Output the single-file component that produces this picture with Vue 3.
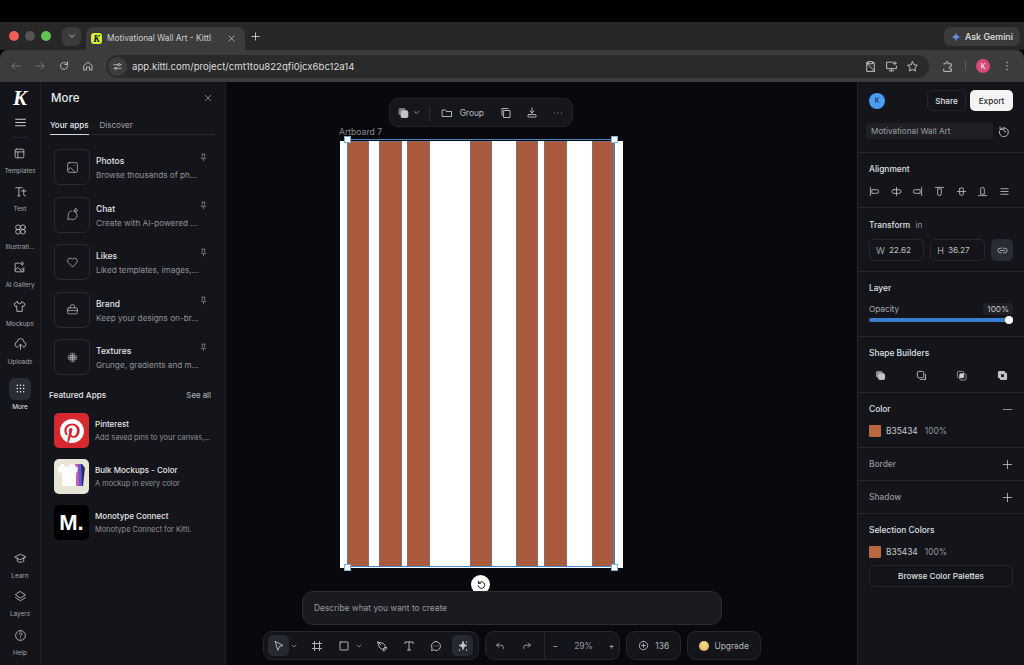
<template>
  <div class="window">
    <div class="os-bar"></div>

    <div class="tab-strip">
      <div class="lights">
        <span class="light red"></span>
        <span class="light grey"></span>
        <span class="light green"></span>
      </div>
      <div class="tab-search">
        <svg viewBox="0 0 24 24" class="ico w10"><path d="M6 9l6 6 6-6" /></svg>
      </div>
      <div class="tab">
        <span class="favicon">K</span>
        <span class="tab-title">Motivational Wall Art - Kittl</span>
        <svg viewBox="0 0 24 24" class="ico w9 light-ico"><path d="M5 5l14 14M19 5L5 19" /></svg>
      </div>
      <svg viewBox="0 0 24 24" class="ico w11 light-ico new-tab"><path d="M12 4v16M4 12h16" /></svg>
      <div class="gemini">
        <svg viewBox="0 0 24 24" class="gem-star">
          <path d="M12 1c1 6 5 10 11 11-6 1-10 5-11 11-1-6-5-10-11-11 6-1 10-5 11-11z" fill="url(#gem)" />
          <defs>
            <linearGradient id="gem" x1="0" y1="0" x2="1" y2="1">
              <stop offset="0" stop-color="#e8735a" />
              <stop offset="0.5" stop-color="#5b8def" />
              <stop offset="1" stop-color="#4f9ef5" />
            </linearGradient>
          </defs>
        </svg>
        <span>Ask Gemini</span>
      </div>
    </div>

    <div class="toolbar">
      <svg viewBox="0 0 24 24" class="ico w12 dim"><path d="M20 12H4M10 6l-6 6 6 6" /></svg>
      <svg viewBox="0 0 24 24" class="ico w12 dim"><path d="M4 12h16M14 6l6 6-6 6" /></svg>
      <svg viewBox="0 0 24 24" class="ico w12"><path d="M19 12a7 7 0 1 1-2-5l2 2M19 4v5h-5" /></svg>
      <svg viewBox="0 0 24 24" class="ico w12"><path d="M4 11l8-7 8 7v9h-5v-6H9v6H4z" /></svg>
      <div class="omnibox">
        <span class="site-info">
          <svg viewBox="0 0 24 24" class="ico w11"><path d="M4 8h9M18 8h2M4 16h2M11 16h9M13 8a2.500 2.500 0 1 0 5 0 2.500 2.500 0 1 0-5 0M6 16a2.500 2.500 0 1 0 5 0 2.500 2.500 0 1 0-5 0" /></svg>
        </span>
        <span class="url">app.kittl.com/project/cmt1tou822qfi0jcx6bc12a14</span>
        <span class="omni-actions">
          <svg viewBox="0 0 24 24" class="ico w13"><path d="M8 5H5v16h14V5h-3M8 3h8v4H8zM4 5l16 16" /></svg>
          <svg viewBox="0 0 24 24" class="ico w13"><path d="M14 4H3v12h18v-5M12 16v4M8 20h8M18 3v6M15 6h6" /></svg>
          <svg viewBox="0 0 24 24" class="ico w13"><path d="M12 3l2.800 5.800 6.200.9-4.500 4.400 1 6.200-5.500-3-5.500 3 1-6.200L3 9.700l6.200-.9z" /></svg>
        </span>
      </div>
      <svg viewBox="0 0 24 24" class="ico w13"><path d="M5 7h4V5a2 2 0 0 1 4 0v2h6v5h-2a2 2 0 0 0 0 4h2v5H5v-4" /></svg>
      <span class="tool-sep"></span>
      <span class="profile">K</span>
      <svg viewBox="0 0 24 24" class="ico w12 dots"><path d="M12 5h.01M12 12h.01M12 19h.01" /></svg>
    </div>

    <div class="app">
      <nav class="rail">
        <span class="logo">K</span>
        <svg viewBox="0 0 24 24" class="ico w13 burger"><path d="M3 6h18M3 12h18M3 18h18" /></svg>
        <span class="rail-rule"></span>
        <div v-for="item in railTop" :key="item.label" class="rail-item">
          <svg viewBox="0 0 24 24" class="ico w13"><path :d="item.d" /></svg>
          <span>{{ item.label }}</span>
        </div>
        <div class="rail-item more">
          <span class="more-box">
            <svg viewBox="0 0 24 24" class="ico w11 heavy"><path d="M5 5h.01M12 5h.01M19 5h.01M5 12h.01M12 12h.01M19 12h.01M5 19h.01M12 19h.01M19 19h.01" /></svg>
          </span>
          <span>More</span>
        </div>
        <div class="rail-bottom">
          <div v-for="item in railBottom" :key="item.label" class="rail-item">
            <svg viewBox="0 0 24 24" class="ico w13"><path :d="item.d" /></svg>
            <span>{{ item.label }}</span>
          </div>
        </div>
      </nav>

      <aside class="panel">
        <div class="panel-head">
          <span class="panel-title">More</span>
          <svg viewBox="0 0 24 24" class="ico w8"><path d="M4 4l16 16M20 4L4 20" /></svg>
        </div>
        <div class="tabs">
          <span class="tab-on">Your apps</span>
          <span class="tab-off">Discover</span>
        </div>
        <div class="apps">
          <div v-for="app in yourApps" :key="app.title" class="app-row">
            <span class="app-box">
              <svg viewBox="0 0 24 24" class="ico w13 thin"><path :d="app.d" /></svg>
            </span>
            <div class="app-text">
              <div class="app-title">{{ app.title }}</div>
              <div class="app-sub">{{ app.sub }}</div>
            </div>
            <svg viewBox="0 0 24 24" class="ico w9 pin"><path d="M8 3h8M9 3v8l-3 4h12l-3-4V3M12 15v6" /></svg>
          </div>
        </div>
        <div class="featured-head">
          <span>Featured Apps</span>
          <span class="see-all">See all</span>
        </div>
        <div class="featured">
          <div class="feat-row">
            <span class="feat-icon pinterest">
              <svg viewBox="0 0 24 24" class="pin-logo"><path fill="#fff" d="M12.017 0C5.396 0 .029 5.367.029 11.987c0 5.079 3.158 9.417 7.618 11.162-.105-.949-.199-2.403.041-3.439.219-.937 1.406-5.957 1.406-5.957s-.359-.72-.359-1.781c0-1.663.967-2.911 2.168-2.911 1.024 0 1.518.769 1.518 1.688 0 1.029-.653 2.567-.992 3.992-.285 1.193.6 2.165 1.775 2.165 2.128 0 3.768-2.245 3.768-5.487 0-2.861-2.063-4.869-5.008-4.869-3.41 0-5.409 2.562-5.409 5.199 0 1.033.394 2.143.889 2.741.099.12.112.225.085.345-.09.375-.293 1.199-.334 1.363-.053.225-.172.271-.401.165-1.495-.69-2.433-2.878-2.433-4.646 0-3.776 2.748-7.252 7.92-7.252 4.158 0 7.392 2.967 7.392 6.923 0 4.135-2.607 7.462-6.233 7.462-1.214 0-2.354-.629-2.758-1.379l-.749 2.848c-.269 1.045-1.004 2.352-1.498 3.146 1.123.345 2.306.535 3.55.535 6.607 0 11.985-5.365 11.985-11.987C23.97 5.39 18.592.026 11.985.026L12.017 0z" /></svg>
            </span>
            <div class="feat-text">
              <div class="app-title">Pinterest</div>
              <div class="app-sub">Add saved pins to your canvas,...</div>
            </div>
          </div>
          <div class="feat-row">
            <span class="feat-icon bulk">
              <svg viewBox="0 0 35 35" class="bulk-art">
                <path d="M25 5h3l3 4-2 18h-4z" fill="#27305c" />
                <path d="M23 5h4l1 22h-4z" fill="#6a55d8" />
                <path d="M21 5h3l1 22h-3z" fill="#c95fa8" />
                <path d="M8 5L3 9l2 5 3-1v14h14V13l1 1 1-5-5-4h-3a3 3 0 0 1-6 0z" fill="#fff" />
              </svg>
            </span>
            <div class="feat-text">
              <div class="app-title">Bulk Mockups - Color</div>
              <div class="app-sub">A mockup in every color</div>
            </div>
          </div>
          <div class="feat-row">
            <span class="feat-icon mono">M.</span>
            <div class="feat-text">
              <div class="app-title">Monotype Connect</div>
              <div class="app-sub">Monotype Connect for Kittl.</div>
            </div>
          </div>
        </div>
      </aside>

      <main class="canvas">
        <div class="float-bar">
          <svg viewBox="0 0 24 24" class="stack-ico">
            <rect x="1" y="1" width="16" height="16" rx="4" fill="#77787d" />
            <rect x="6" y="6" width="17" height="17" rx="4" fill="#c2c3c7" />
          </svg>
          <svg viewBox="0 0 24 24" class="ico w9"><path d="M6 9l6 6 6-6" /></svg>
          <span class="float-sep"></span>
          <svg viewBox="0 0 24 24" class="ico w12"><path d="M3 6h6l2 3h10v10H3z" /></svg>
          <span class="float-label">Group</span>
          <svg viewBox="0 0 24 24" class="ico w12 gap-r"><path d="M8 7h12v14H8zM4 17V3h12" /></svg>
          <svg viewBox="0 0 24 24" class="ico w12 gap-r"><path d="M12 2v10M8 8l4 4 4-4M5 15h14a1 1 0 0 1 1 1v3a1 1 0 0 1-1 1H5a1 1 0 0 1-1-1v-3a1 1 0 0 1 1-1z" /></svg>
          <svg viewBox="0 0 24 24" class="ico w12"><path d="M5 12h.01M12 12h.01M19 12h.01" /></svg>
        </div>

        <span class="board-name">Artboard 7</span>
        <div class="artboard"></div>
        <div
          v-for="s in stripes"
          :key="s.x"
          class="stripe"
          :style="{ left: s.x + 'px', width: s.w + 'px' }"
        ></div>
        <div class="selection"></div>
        <span class="handle tl"></span>
        <span class="handle tr"></span>
        <span class="handle bl"></span>
        <span class="handle br"></span>
        <span class="rotate">
          <svg viewBox="0 0 24 24" class="ico w10 dark"><path d="M6 8a8 8 0 1 1-1 6M6 3v5h5" /></svg>
        </span>

        <div class="dock">
          <div class="prompt">Describe what you want to create</div>
          <div class="dock-row">
            <div class="dock-group tools">
              <span class="tool on"><svg viewBox="0 0 24 24" class="ico w12"><path d="M5 3l15 8-7 2-3 7z" /></svg></span>
              <svg viewBox="0 0 24 24" class="ico w8 chev"><path d="M6 9l6 6 6-6" /></svg>
              <span class="tool"><svg viewBox="0 0 24 24" class="ico w12"><path d="M7 3v18M17 3v18M3 7h18M3 17h18" /></svg></span>
              <span class="tool"><svg viewBox="0 0 24 24" class="ico w12"><path d="M5 4h14a1 1 0 0 1 1 1v14a1 1 0 0 1-1 1H5a1 1 0 0 1-1-1V5a1 1 0 0 1 1-1z" /></svg></span>
              <svg viewBox="0 0 24 24" class="ico w8 chev"><path d="M6 9l6 6 6-6" /></svg>
              <span class="tool"><svg viewBox="0 0 24 24" class="ico w12"><path d="M4 4l11 3 4 6-6 6-6-4zM4 4l6 6M14 20l6-6 2 2-6 6z" /></svg></span>
              <span class="tool"><svg viewBox="0 0 24 24" class="ico w12"><path d="M4 7V4h16v3M12 4v16M9 20h6" /></svg></span>
              <span class="tool"><svg viewBox="0 0 24 24" class="ico w12"><path d="M12 3a9 9 0 1 1-4.500 16.800L3 21l1.200-4.500A9 9 0 0 1 12 3zM8 12h.01M12 12h.01M16 12h.01" /></svg></span>
              <span class="tool on"><svg viewBox="0 0 24 24" class="ico w12 filled"><path d="M12 3c1 5 3 7 8 8-5 1-7 3-8 8-1-5-3-7-8-8 5-1 7-3 8-8zM19 3v2M19 19v2M5 19v2" /></svg></span>
            </div>
            <div class="dock-group history">
              <span class="hist-btns">
                <svg viewBox="0 0 24 24" class="ico w10"><path d="M9 5L4 10l5 5M4 10h10a6 6 0 0 1 6 6v2" /></svg>
                <svg viewBox="0 0 24 24" class="ico w10"><path d="M15 5l5 5-5 5M20 10H10a6 6 0 0 0-6 6v2" /></svg>
              </span>
              <span class="zoom">
                <span>−</span>
                <span class="zoom-val">29%</span>
                <span>+</span>
              </span>
            </div>
            <div class="dock-group credits">
              <svg viewBox="0 0 24 24" class="ico w11"><path d="M12 3a9 9 0 1 1 0 18 9 9 0 0 1 0-18zM12 8v8M8 12h8" /></svg>
              <span>136</span>
            </div>
            <div class="dock-group upgrade">
              <span class="coin"></span>
              <span>Upgrade</span>
            </div>
          </div>
        </div>
      </main>

      <aside class="props">
        <div class="props-top">
          <div class="props-actions">
            <span class="user">K</span>
            <span class="share">Share</span>
            <span class="export">Export</span>
          </div>
          <div class="name-row">
            <span class="name-field">Motivational Wall Art</span>
            <svg viewBox="0 0 24 24" class="ico w12"><path d="M4 4v5h5M4.500 9A9 9 0 1 1 3 12M12 7v5l4 2" /></svg>
          </div>
        </div>

        <section class="sec align">
          <div class="sec-title">Alignment</div>
          <div class="icon-row">
            <svg v-for="d in alignIcons" :key="d" viewBox="0 0 24 24" class="ico w11"><path :d="d" /></svg>
          </div>
        </section>

        <section class="sec transform">
          <div class="sec-title">Transform <span class="unit">in</span></div>
          <div class="wh-row">
            <span class="wh"><i>W</i>22.62</span>
            <span class="wh"><i>H</i>36.27</span>
            <span class="link">
              <svg viewBox="0 0 24 24" class="ico w11"><path d="M10 7H7a5 5 0 0 0 0 10h3M14 7h3a5 5 0 0 1 0 10h-3M8 12h8" /></svg>
            </span>
          </div>
        </section>

        <section class="sec layer">
          <div class="sec-title">Layer</div>
          <div class="opacity-row">
            <span>Opacity</span>
            <span class="opacity-val">100%</span>
          </div>
          <div class="slider"><span class="knob"></span></div>
        </section>

        <section class="sec builders">
          <div class="sec-title">Shape Builders</div>
          <div class="icon-row wide">
            <svg viewBox="0 0 24 24" class="builder">
              <rect x="2" y="2" width="15" height="15" rx="4" fill="#8c8d92" />
              <rect x="7" y="7" width="15" height="15" rx="4" fill="#c2c3c7" />
            </svg>
            <svg viewBox="0 0 24 24" class="builder">
              <rect x="3" y="3" width="14" height="14" rx="3" fill="none" stroke="#c2c3c7" stroke-width="2" />
              <path d="M20 8a2 2 0 0 1 2 2v9a3 3 0 0 1-3 3h-9a2 2 0 0 1-2-2h9a3 3 0 0 0 3-3z" fill="#c2c3c7" />
            </svg>
            <svg viewBox="0 0 24 24" class="builder">
              <rect x="3" y="3" width="14" height="14" rx="3" fill="none" stroke="#9a9ba0" stroke-width="2" />
              <rect x="8" y="8" width="14" height="14" rx="3" fill="none" stroke="#9a9ba0" stroke-width="2" />
              <rect x="8" y="8" width="9" height="9" fill="#d4d5d8" />
            </svg>
            <svg viewBox="0 0 24 24" class="builder">
              <path fill-rule="evenodd" d="M5 2h10a3 3 0 0 1 3 3v1h1a3 3 0 0 1 3 3v10a3 3 0 0 1-3 3H9a3 3 0 0 1-3-3v-1H5a3 3 0 0 1-3-3V5a3 3 0 0 1 3-3zM9 9v6h6V9z" fill="#c2c3c7" />
            </svg>
          </div>
        </section>

        <section class="sec color">
          <div class="sec-head">
            <span class="sec-title">Color</span>
            <span class="minus"></span>
          </div>
          <div class="swatch-row">
            <span class="swatch"></span>
            <span class="hex">B35434</span>
            <span class="pct">100%</span>
          </div>
        </section>

        <section class="sec slim">
          <span class="sec-dim">Border</span>
          <svg viewBox="0 0 24 24" class="ico w11"><path d="M12 3v18M3 12h18" /></svg>
        </section>
        <section class="sec slim">
          <span class="sec-dim">Shadow</span>
          <svg viewBox="0 0 24 24" class="ico w11"><path d="M12 3v18M3 12h18" /></svg>
        </section>

        <section class="sec selection-colors">
          <div class="sec-title">Selection Colors</div>
          <div class="swatch-row">
            <span class="swatch"></span>
            <span class="hex">B35434</span>
            <span class="pct">100%</span>
          </div>
          <div class="browse">Browse Color Palettes</div>
        </section>
      </aside>
    </div>
  </div>
</template>

<script setup>
const railTop = [
  { label: 'Templates', d: 'M6 4h12a2 2 0 0 1 2 2v12a2 2 0 0 1-2 2H6a2 2 0 0 1-2-2V6a2 2 0 0 1 2-2zM4 9h16M9 9v11' },
  { label: 'Text', d: 'M3 5h12M9 5v15M7 20h4M14 11h8M18 8v10q0 2 3 2' },
  { label: 'Illustrati...', d: 'M12 8a4.500 4.500 0 1 1-9 0 4.500 4.500 0 1 1 9 0zM21 8a4.500 4.500 0 1 1-9 0 4.500 4.500 0 1 1 9 0zM12 16a4.500 4.500 0 1 1-9 0 4.500 4.500 0 1 1 9 0zM21 16a4.500 4.500 0 1 1-9 0 4.500 4.500 0 1 1 9 0z' },
  { label: 'AI Gallery', d: 'M12 4H5a1 1 0 0 0-1 1v14a1 1 0 0 0 1 1h14a1 1 0 0 0 1-1v-7M4 17l5-5 8 8M14 16l2-2 4 4M17 2c.4 2 1 2.600 3 3-2 .4-2.600 1-3 3-.4-2-1-2.600-3-3 2-.4 2.600-1 3-3z' },
  { label: 'Mockups', d: 'M8 3L2 7l2 5 3-1v10h10V11l3 1 2-5-6-4a3.500 3.500 0 0 1-8 0z' },
  { label: 'Uploads', d: 'M7 17a5 5 0 0 1-1-9.900 6 6 0 0 1 12 0A5 5 0 0 1 17 17M12 21v-9M8.500 15l3.500-3.500 3.500 3.500' }
]

const railBottom = [
  { label: 'Learn', d: 'M2 9l10-5 10 5-10 5zM6 11.500V17c3 2.500 9 2.500 12 0v-5.500' },
  { label: 'Layers', d: 'M12 3l9 6-9 6-9-6zM3 14l9 6 9-6' },
  { label: 'Help', d: 'M12 3a9 9 0 1 1 0 18 9 9 0 0 1 0-18zM9.500 9.500a2.500 2.500 0 1 1 4 2c-1 .8-1.500 1.200-1.500 2.500M12 17h.01' }
]

const yourApps = [
  { title: 'Photos', sub: 'Browse thousands of ph...', d: 'M6 3h12a3 3 0 0 1 3 3v12a3 3 0 0 1-3 3H6a3 3 0 0 1-3-3V6a3 3 0 0 1 3-3zM3 17l5-5 8 8M15 8h.01' },
  { title: 'Chat', sub: 'Create with AI-powered ...', d: 'M14 5.500A8 8 0 1 1 8.500 20.300L3 21l1.500-4.700A8 8 0 0 1 10 5.500M18 1c.4 2.200 1.200 3 3.500 3.500-2.300.5-3.100 1.300-3.500 3.500-.4-2.200-1.200-3-3.500-3.500C16.800 4 17.600 3.200 18 1z' },
  { title: 'Likes', sub: 'Liked templates, images,...', d: 'M12 20l-8-8a5 5 0 0 1 8-6 5 5 0 0 1 8 6z' },
  { title: 'Brand', sub: 'Keep your designs on-br...', d: 'M5 9h14a2 2 0 0 1 2 2v7a2 2 0 0 1-2 2H5a2 2 0 0 1-2-2v-7a2 2 0 0 1 2-2zM8 9V7a4 4 0 0 1 8 0v2M3 14h18' },
  { title: 'Textures', sub: 'Grunge, gradients and m...', d: 'M9 4v16M12 4v16M15 4v16M4 9h16M4 12h16M4 15h16' }
]

const alignIcons = [
  'M3 3v18M7 8h10a4 4 0 0 1 0 8H7z',
  'M12 3v18M6 8h12a2 2 0 0 1 0 8H6a2 2 0 0 1 0-8z',
  'M21 3v18M17 8H7a4 4 0 0 0 0 8h10z',
  'M3 3h18M8 7v10a4 4 0 0 0 8 0V7z',
  'M3 12h18M8 6v12a4 2 0 0 0 8 0V6a4 2 0 0 0-8 0z',
  'M3 21h18M8 17V7a4 4 0 0 1 8 0v10z',
  'M4 6h16M4 12h16M4 18h16'
]

const stripes = [
  { x: 121, w: 22 },
  { x: 153, w: 23 },
  { x: 181, w: 23 },
  { x: 244, w: 22 },
  { x: 290, w: 22 },
  { x: 318, w: 23 },
  { x: 366, w: 23 }
]
</script>

<style>
html,
body {
  margin: 0;
  background: #000;
}
</style>

<style scoped>
.window {
  width: 1024px;
  height: 665px;
  display: flex;
  flex-direction: column;
  overflow: hidden;
  background: #000;
  font-family: Inter, "Liberation Sans", sans-serif;
  color: #e4e5e8;
}

.ico {
  fill: none;
  stroke: currentColor;
  stroke-width: 1.8;
  stroke-linecap: round;
  stroke-linejoin: round;
  flex: none;
  color: #c3c4c8;
}

.ico.thin { stroke-width: 1.3; }

.w8 { width: 8px; height: 8px; }
.w9 { width: 9px; height: 9px; }
.w10 { width: 10px; height: 10px; }
.w11 { width: 11px; height: 11px; }
.w12 { width: 12px; height: 12px; }
.w13 { width: 13px; height: 13px; }

.os-bar {
  height: 22px;
  flex: none;
}

.tab-strip {
  height: 28px;
  flex: none;
  background: #272727;
  display: flex;
  align-items: center;
  position: relative;
}

.lights {
  display: flex;
  gap: 6px;
  padding-left: 9px;
  width: 53px;
  box-sizing: border-box;
}

.light {
  width: 10px;
  height: 10px;
  border-radius: 50%;
}

.red { background: #ee5f57; }
.grey { background: #545454; }
.green { background: #5fc454; }

.tab-search {
  width: 19px;
  height: 19px;
  margin-left: 9px;
  border-radius: 6px;
  background: #3b3b3b;
  display: flex;
  align-items: center;
  justify-content: center;
}

.tab-search .ico {
  color: #e8e8e8;
}

.tab {
  width: 159px;
  height: 23px;
  margin-top: 5px;
  margin-left: 5px;
  background: #3c3c3c;
  border-radius: 8px 8px 0 0;
  display: flex;
  align-items: center;
  box-sizing: border-box;
  padding: 0 9px 1px 5px;
}

.favicon {
  width: 11px;
  height: 11px;
  border-radius: 3px;
  background: #d5f03a;
  color: #111;
  font: italic 700 10px/11px "Liberation Serif", serif;
  text-align: center;
  flex: none;
}

.tab-title {
  font-size: 8.3px;
  margin-left: 5px;
  color: #d0d0d0;
  flex: 1;
  white-space: nowrap;
}

.light-ico { color: #dcdcdc; }

.new-tab {
  margin-left: 5px;
}

.gemini {
  position: absolute;
  right: 4px;
  top: 5px;
  height: 19px;
  width: 76px;
  box-sizing: border-box;
  background: #3a3a3a;
  border-radius: 7px;
  display: flex;
  align-items: center;
  justify-content: center;
  gap: 4px;
  font-size: 8.9px;
  font-weight: 500;
  color: #e2e2e2;
}

.gem-star {
  width: 10px;
  height: 10px;
}

.toolbar {
  height: 32px;
  flex: none;
  background: #3c3c3c;
  border-radius: 8px 8px 0 0;
  display: flex;
  align-items: center;
  gap: 12px;
  padding: 0 8px 0 10px;
  box-sizing: border-box;
}

.dim { color: #777; }

.omnibox {
  width: 823px;
  height: 23px;
  background: #2a2a2a;
  border-radius: 12px;
  display: flex;
  align-items: center;
  box-sizing: border-box;
  padding: 0 10px 0 2px;
}

.site-info {
  width: 19px;
  height: 19px;
  border-radius: 50%;
  background: #3d3d3d;
  display: flex;
  align-items: center;
  justify-content: center;
}

.url {
  margin-left: 5px;
  font-size: 9.6px;
  color: #dcdcdc;
  flex: 1;
}

.omni-actions {
  display: flex;
  gap: 8px;
}

.tool-sep {
  width: 1px;
  height: 10px;
  background: #5a5a5a;
  margin-left: -1px;
}

.profile {
  width: 14px;
  height: 14px;
  margin-left: -2px;
  border-radius: 50%;
  background: #d94a78;
  color: #fff;
  font-size: 7px;
  display: flex;
  align-items: center;
  justify-content: center;
}

.dots {
  margin-left: -1px;
  stroke-width: 3;
}

.app {
  flex: 1;
  display: flex;
  min-height: 0;
}

/* left rail */
.rail {
  width: 41px;
  flex: none;
  background: #14151a;
  border-right: 1px solid #22232a;
  box-sizing: border-box;
  display: flex;
  flex-direction: column;
  align-items: center;
}

.logo {
  font: italic 700 21px/20px "Liberation Serif", serif;
  color: #fff;
  margin-top: 6px;
}

.burger {
  margin-top: 8px;
  color: #d0d1d4;
}

.rail-rule {
  width: 16px;
  height: 1px;
  background: #25262d;
  margin-top: 8px;
  margin-bottom: 8.500px;
}

.rail-item {
  height: 38.3px;
  display: flex;
  flex-direction: column;
  align-items: center;
  gap: 7px;
  font-size: 6.4px;
  color: #a6a7ab;
  white-space: nowrap;
}

.rail-item .ico {
  color: #c9cace;
  stroke-width: 1.5;
}

.more {
  height: auto;
  margin-top: 1.700px;
  gap: 3px;
  color: #e3e4e6;
}

.more-box {
  width: 22px;
  height: 22px;
  background: #2b2d36;
  border-radius: 6px;
  display: flex;
  align-items: center;
  justify-content: center;
}

.rail-item .heavy {
  stroke-width: 3;
  color: #fff;
}

.rail-bottom {
  margin-top: auto;
  margin-bottom: -2px;
}

/* apps panel */
.panel {
  width: 185px;
  flex: none;
  background: #14151a;
  border-right: 1px solid #1d1e24;
  box-sizing: border-box;
  padding: 0 10px 0 10px;
}

.panel-head {
  height: 32px;
  display: flex;
  align-items: center;
  justify-content: space-between;
  padding-right: 3px;
}

.panel-title {
  font-size: 11.5px;
  font-weight: 500;
  color: #e8e9eb;
}

.tabs {
  display: flex;
  gap: 11px;
  margin-top: 6px;
  margin-left: -1px;
  height: 11px;
  padding-bottom: 3px;
  font-size: 8px;
  border-bottom: 1px solid #2a2b31;
  box-sizing: content-box;
}

.tab-on {
  color: #e8e9eb;
  font-weight: 500;
  position: relative;
}

.tab-on::after {
  content: "";
  position: absolute;
  left: 0;
  right: -1px;
  bottom: -4px;
  height: 1px;
  background: #d6d7da;
}

.tab-off { color: #a2a3a8; }

.apps {
  margin-top: 14px;
  padding-left: 3px;
  display: flex;
  flex-direction: column;
  gap: 11.5px;
}

.app-row {
  display: flex;
  align-items: center;
  gap: 6px;
  position: relative;
}

.app-box {
  width: 36px;
  height: 36px;
  flex: none;
  border: 1px solid #2a2b31;
  border-radius: 6px;
  box-sizing: border-box;
  display: flex;
  align-items: center;
  justify-content: center;
}

.app-text { padding-top: 2px; }

.app-title {
  font-size: 8.5px;
  font-weight: 500;
  color: #e4e5e7;
  line-height: 12px;
}

.app-sub {
  font-size: 8.2px;
  color: #929398;
  line-height: 12px;
  margin-top: 2px;
  white-space: nowrap;
}

.feat-text { padding-top: 1px; }
.feat-text .app-title { font-size: 8px; }
.feat-text .app-sub { font-size: 7.4px; }

.pin {
  position: absolute;
  right: 7px;
  top: 4px;
  color: #8b8c91;
}

.featured-head {
  display: flex;
  justify-content: space-between;
  margin-top: 15px;
  margin-left: -2px;
  padding-right: 4px;
  font-size: 8.2px;
  font-weight: 500;
  color: #e4e5e7;
}

.see-all {
  font-size: 7.8px;
  color: #a8a9ad;
}

.featured {
  margin-top: 13px;
  padding-left: 3px;
  display: flex;
  flex-direction: column;
  gap: 11px;
}

.feat-row {
  display: flex;
  align-items: center;
  gap: 6px;
}

.feat-icon {
  width: 35px;
  height: 35px;
  flex: none;
  border-radius: 5px;
  display: flex;
  align-items: center;
  justify-content: center;
}

.pinterest { background: #d7282f; }

.pin-logo {
  width: 24px;
  height: 24px;
}

.bulk { background: #e8e4d6; }

.bulk-art {
  width: 35px;
  height: 35px;
}

.mono {
  background: #000;
  color: #fff;
  font: 700 22px/1 "Liberation Sans", sans-serif;
}

/* canvas */
.canvas {
  flex: 1;
  position: relative;
  background: #08090c;
}

.float-bar {
  position: absolute;
  left: 163px;
  top: 16px;
  width: 184px;
  height: 29px;
  background: #16171b;
  border: 1px solid #23242a;
  border-radius: 9px;
  box-sizing: border-box;
  display: flex;
  align-items: center;
  padding: 0 8px;
  gap: 3px;
}

.stack-ico {
  width: 12px;
  height: 12px;
}

.float-sep {
  width: 1px;
  height: 16px;
  background: #2a2b31;
  margin: 0 8px 0 5px;
}

.float-label {
  font-size: 8.4px;
  color: #bcbdc1;
  margin: 0 13px 0 4px;
}

.float-bar .gap-r { margin-right: 11px; }

.board-name {
  position: absolute;
  left: 113px;
  top: 45px;
  font-size: 8.6px;
  color: #8a8b90;
}

.artboard {
  position: absolute;
  left: 114px;
  top: 59px;
  width: 283px;
  height: 427px;
  background: #fff;
}

.stripe {
  position: absolute;
  top: 59px;
  height: 426px;
  background: #a9593c;
  outline: 1px solid rgba(90, 130, 170, 0.45);
  outline-offset: -1px;
}

.selection {
  position: absolute;
  left: 121px;
  top: 57px;
  width: 267px;
  height: 428px;
  box-sizing: border-box;
  border: 1px solid #4a86c5;
}

.handle {
  position: absolute;
  width: 5px;
  height: 5px;
  background: #fff;
  border: 1px solid #7db0dd;
  box-sizing: content-box;
}

.tl { left: 118px; top: 54px; }
.tr { left: 385px; top: 54px; }
.bl { left: 118px; top: 482px; }
.br { left: 385px; top: 482px; }

.rotate {
  position: absolute;
  left: 245px;
  top: 493px;
  width: 19px;
  height: 19px;
  border-radius: 50%;
  background: #fff;
  display: flex;
  align-items: center;
  justify-content: center;
}

.dark { color: #222; stroke-width: 2.4; }

.dock {
  position: absolute;
  left: 37px;
  bottom: 5px;
  width: 498px;
  display: flex;
  flex-direction: column;
  align-items: center;
  gap: 6px;
}

.prompt {
  width: 420px;
  height: 34px;
  box-sizing: border-box;
  background: #1a1b20;
  border: 1px solid #2b2c32;
  border-radius: 11px;
  padding: 0 11px;
  display: flex;
  align-items: center;
  font-size: 8.4px;
  color: #97989d;
}

.dock-row {
  width: 100%;
  display: flex;
  gap: 6px;
}

.dock-group {
  height: 29px;
  box-sizing: border-box;
  background: #14151a;
  border: 1px solid #25262c;
  border-radius: 9px;
  display: flex;
  align-items: center;
  font-size: 8.4px;
  color: #b4b5b9;
}

.tools {
  width: 216px;
  padding: 0 3px 0 4px;
  gap: 6px;
}

.tools .chev {
  margin-left: -5px;
  margin-right: 2px;
}

.tool {
  width: 21px;
  height: 21px;
  border-radius: 5px;
  display: flex;
  align-items: center;
  justify-content: center;
}

.tool.on { background: #272931; }

.filled { fill: currentColor; }

.history { width: 136px; }

.hist-btns {
  width: 59px;
  height: 100%;
  display: flex;
  align-items: center;
  justify-content: center;
  gap: 17px;
  padding-right: 3px;
  box-sizing: border-box;
  border-right: 1px solid #25262c;
}

.zoom {
  flex: 1;
  display: flex;
  justify-content: space-between;
  padding: 0 5px 0 8px;
}

.zoom-val { color: #96979b; }

.credits {
  width: 55px;
  justify-content: center;
  gap: 6px;
}

.upgrade {
  width: 74px;
  justify-content: center;
  gap: 5px;
}

.coin {
  width: 10px;
  height: 10px;
  border-radius: 50%;
  background: radial-gradient(circle at 50% 35%, #f6dc8e, #e4b04e);
}

/* properties */
.props {
  width: 167px;
  flex: none;
  background: #14151a;
  border-left: 1px solid #23242a;
  box-sizing: border-box;
}

.props-top {
  height: 70px;
  box-sizing: border-box;
  padding: 8px 11px 0 8px;
}

.props-actions {
  display: flex;
  align-items: center;
  gap: 4px;
}

.user {
  width: 16px;
  height: 16px;
  margin-left: 3px;
  margin-right: auto;
  border-radius: 50%;
  background: #4b9cf3;
  color: #12233a;
  font-size: 7px;
  display: flex;
  align-items: center;
  justify-content: center;
}

.share,
.export {
  height: 21px;
  box-sizing: border-box;
  border-radius: 5px;
  display: flex;
  align-items: center;
  justify-content: center;
  font-size: 8.2px;
  font-weight: 500;
}

.share {
  width: 39px;
  border: 1px solid #26272d;
  color: #dfe0e2;
}

.export {
  width: 43px;
  background: #f4f4f5;
  color: #26272b;
}

.name-row {
  margin-top: 12px;
  display: flex;
  align-items: center;
  gap: 5px;
}

.name-field {
  width: 127px;
  height: 16px;
  background: #1f2026;
  border-radius: 3px;
  font-size: 8.2px;
  color: #9c9da2;
  display: flex;
  align-items: center;
  padding-left: 5px;
  box-sizing: border-box;
}

.sec {
  border-top: 1px solid #26272d;
  padding: 0 11px;
  box-sizing: border-box;
}

.sec-title {
  font-size: 8.4px;
  font-weight: 500;
  color: #dfe0e2;
  line-height: 11px;
}

.align { height: 55px; padding-top: 11px; }
.transform { height: 64px; padding-top: 12px; }
.layer { height: 65px; padding-top: 11px; }
.builders { height: 56px; padding-top: 11px; }
.color { height: 55px; padding-top: 11px; }
.selection-colors { height: 85px; padding-top: 11px; }

.icon-row {
  margin-top: 11px;
  display: flex;
  justify-content: space-between;
  padding-right: 3px;
}

.icon-row.wide {
  padding: 0 5px 0 6px;
  margin-top: 11px;
}

.unit {
  margin-left: 3px;
  color: #8f9095;
  font-weight: 400;
}

.wh-row {
  margin-top: 8px;
  display: flex;
  gap: 6px;
}

.wh {
  width: 56px;
  height: 22px;
  box-sizing: border-box;
  border: 1px solid #26272d;
  border-radius: 5px;
  font-size: 8.2px;
  color: #bfc0c4;
  display: flex;
  align-items: center;
  padding-left: 6px;
}

.wh i {
  font-style: normal;
  font-size: 9px;
  margin-right: 4px;
  color: #a5a6aa;
}

.link {
  width: 22px;
  height: 22px;
  border-radius: 5px;
  background: #2a2c35;
  display: flex;
  align-items: center;
  justify-content: center;
}

.opacity-row {
  margin-top: 9px;
  display: flex;
  justify-content: space-between;
  align-items: center;
  font-size: 8.2px;
  color: #a8a9ad;
}

.opacity-val {
  background: #1f2026;
  border-radius: 4px;
  padding: 1px 4px;
  color: #c8c9cc;
}

.slider {
  margin-top: 3px;
  height: 4px;
  border-radius: 2px;
  background: #3a7fd0;
  position: relative;
}

.knob {
  position: absolute;
  right: 0;
  top: -2px;
  width: 8px;
  height: 8px;
  border-radius: 50%;
  background: #fff;
}

.builder {
  width: 11px;
  height: 11px;
}

.sec-head {
  display: flex;
  justify-content: space-between;
  align-items: center;
}

.minus {
  width: 9px;
  height: 1.500px;
  background: #8f9095;
  margin-right: 1px;
}

.swatch-row {
  margin-top: 10px;
  display: flex;
  align-items: center;
  font-size: 8.4px;
}

.swatch {
  width: 12px;
  height: 12px;
  border-radius: 1px;
  background: #b9673f;
  margin-right: 5px;
}

.hex { color: #c8c9cc; }

.pct {
  margin-left: 7px;
  color: #96979b;
}

.slim {
  height: 33px;
  display: flex;
  align-items: center;
  justify-content: space-between;
}

.sec-dim {
  font-size: 8.4px;
  font-weight: 500;
  color: #96979b;
}

.browse {
  margin-top: 7px;
  height: 22px;
  border: 1px solid #26272d;
  border-radius: 5px;
  box-sizing: border-box;
  display: flex;
  align-items: center;
  justify-content: center;
  font-size: 8.2px;
  font-weight: 500;
  color: #dfe0e2;
}
</style>
